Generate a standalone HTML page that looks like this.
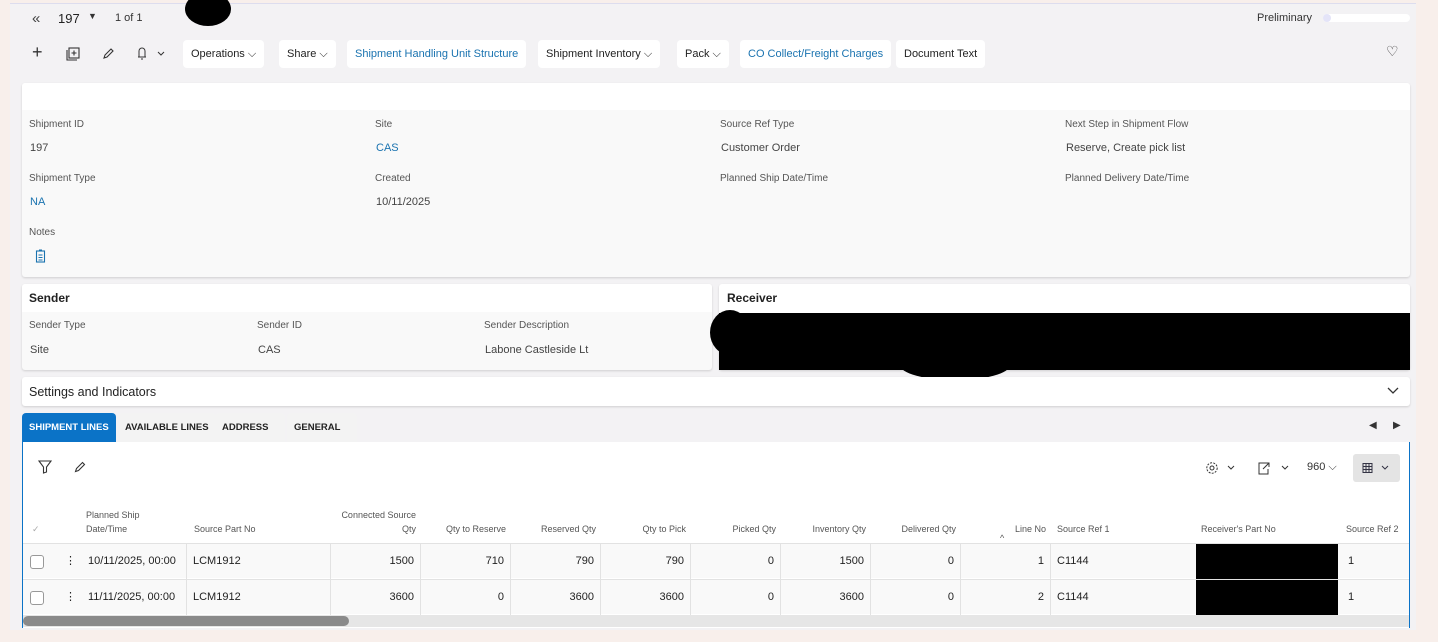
<!DOCTYPE html>
<html><head><meta charset="utf-8"><style>
*{box-sizing:border-box;margin:0;padding:0}
body{width:1438px;height:642px;background:#f8efeb;font-family:"Liberation Sans",sans-serif;font-size:11px;color:#333;position:relative;overflow:hidden}
.a{position:absolute}
#main{left:10px;top:3px;width:1406px;height:627px;background:#f3f2f4;border-top:1px solid #dde}
.btn{position:absolute;top:40px;height:28px;background:#fff;border-radius:4px;font-size:11px;line-height:28px;padding:0 8px;color:#222;white-space:nowrap}
.lbl{position:absolute;font-size:10px;color:#555}
.val{position:absolute;font-size:11px;color:#444}
.blue,.val.blue,.btn.blue{color:#1a73b0}
.card{position:absolute;background:#f9f9f9;border-radius:3px;box-shadow:0 1px 2px rgba(0,0,0,.15)}
.hdr{position:absolute;font-size:12px;font-weight:bold;color:#222}
.th{position:absolute;font-size:9px;color:#555;text-align:right;line-height:14px}
.row{position:absolute;left:23px;width:1386px;height:35px;background:#f9f9f9;border-top:1px solid #e2e2e2}
.c{position:absolute;top:0;height:35px;line-height:35px;font-size:11px;color:#222;border-right:1px solid #e2e2e2;padding:0 6px}
.r{text-align:right}
.tab{position:absolute;top:413px;height:29px;line-height:29px;font-size:9.5px;font-weight:bold;background:#f3f3f3;padding:0 7px;border-radius:4px 4px 0 0;color:#222}
</style></head><body>
<div id="main" class="a"></div>
<div class="a" style="left:32px;top:10px;font-size:15px;color:#444">«</div>
<div class="a" style="left:58px;top:11px;font-size:13px;color:#222">197</div>
<div class="a" style="left:88px;top:11px;font-size:9px">▼</div>
<div class="a" style="left:115px;top:12px;font-size:11px">1 of 1</div>
<div class="a" style="left:185px;top:-8px;width:46px;height:34px;border-radius:50%;background:#000"></div>
<div class="a" style="left:1257px;top:12px;font-size:11px">Preliminary</div>
<div class="a" style="left:1323px;top:14px;width:87px;height:8px;border-radius:4px;background:#fff"></div>
<div class="a" style="left:1323px;top:14px;width:8px;height:8px;border-radius:4px;background:#e4e4f8"></div>
<div class="a" style="left:32px;top:42px;font-size:18px;color:#333">+</div>
<svg class="a" style="left:66px;top:47px" width="14" height="14" viewBox="0 0 14 14" fill="none" stroke="#333" stroke-width="1.1"><rect x="3" y="1" width="10" height="10"/><path d="M1 3v10h10M8 3.5v5M5.5 6h5"/></svg>
<svg class="a" style="left:102px;top:47px" width="13" height="13" viewBox="0 0 13 13" fill="none" stroke="#333" stroke-width="1.1"><path d="M2 11l1-3 6-6 2 2-6 6z"/></svg>
<svg class="a" style="left:135px;top:46px" width="30" height="14" viewBox="0 0 30 14" fill="none" stroke="#333" stroke-width="1"><path d="M3 11h8M4 11V5a3 3 0 016 0v6M6 13h2M23 6l3 3 3-3"/></svg>
<div class="btn" style="left:183px">Operations ⌵</div>
<div class="btn" style="left:279px">Share ⌵</div>
<div class="btn blue" style="left:347px">Shipment Handling Unit Structure</div>
<div class="btn" style="left:538px">Shipment Inventory ⌵</div>
<div class="btn" style="left:677px">Pack ⌵</div>
<div class="btn blue" style="left:740px">CO Collect/Freight Charges</div>
<div class="btn" style="left:896px">Document Text</div>
<div class="a" style="left:1386px;top:43px;font-size:14px;color:#333">♡</div>

<div class="card" style="left:22px;top:83px;width:1388px;height:194px"></div>
<div class="a" style="left:22px;top:83px;width:1388px;height:27px;background:#fff;border-radius:3px 3px 0 0"></div>
<div class="lbl" style="left:29px;top:119px">Shipment ID</div><div class="val" style="left:30px;top:142px">197</div>
<div class="lbl" style="left:375px;top:119px">Site</div><div class="val blue" style="left:376px;top:142px">CAS</div>
<div class="lbl" style="left:720px;top:119px">Source Ref Type</div><div class="val" style="left:721px;top:142px">Customer Order</div>
<div class="lbl" style="left:1065px;top:119px">Next Step in Shipment Flow</div><div class="val" style="left:1066px;top:142px">Reserve, Create pick list</div>
<div class="lbl" style="left:29px;top:173px">Shipment Type</div><div class="val blue" style="left:30px;top:196px">NA</div>
<div class="lbl" style="left:375px;top:173px">Created</div><div class="val" style="left:376px;top:196px">10/11/2025</div>
<div class="lbl" style="left:720px;top:173px">Planned Ship Date/Time</div>
<div class="lbl" style="left:1065px;top:173px">Planned Delivery Date/Time</div>
<div class="lbl" style="left:29px;top:227px">Notes</div>
<svg class="a" style="left:35px;top:249px" width="11" height="14" viewBox="0 0 11 14" fill="none" stroke="#1a73b0" stroke-width="1.1"><rect x="1.5" y="2" width="8" height="11"/><path d="M4 1h3M3.5 6h4M3.5 8.5h4M3.5 11h4"/></svg>

<div class="card" style="left:22px;top:284px;width:690px;height:86px"></div>
<div class="a" style="left:22px;top:284px;width:690px;height:28px;background:#fff;border-radius:3px 3px 0 0"></div>
<div class="hdr" style="left:29px;top:291px">Sender</div>
<div class="lbl" style="left:29px;top:320px">Sender Type</div><div class="val" style="left:30px;top:344px">Site</div>
<div class="lbl" style="left:257px;top:320px">Sender ID</div><div class="val" style="left:258px;top:344px">CAS</div>
<div class="lbl" style="left:484px;top:320px">Sender Description</div><div class="val" style="left:485px;top:344px">Labone Castleside Lt</div>
<div class="card" style="left:719px;top:284px;width:691px;height:86px;background:#fff"></div>
<div class="hdr" style="left:727px;top:291px">Receiver</div>
<div class="a" style="left:719px;top:313px;width:691px;height:57px;background:#000"></div>
<div class="a" style="left:710px;top:310px;width:40px;height:45px;border-radius:50%;background:#000"></div>
<div class="a" style="left:900px;top:350px;width:110px;height:30px;border-radius:50%;background:#000"></div>

<div class="card" style="left:22px;top:377px;width:1388px;height:29px;background:#fff"></div>
<div class="hdr" style="left:29px;top:385px;font-weight:normal;font-size:12.5px">Settings and Indicators</div>
<svg class="a" style="left:1387px;top:386px" width="12" height="10" viewBox="0 0 12 10" fill="none" stroke="#333" stroke-width="1.3"><path d="M1 2l5 5 5-5"/></svg>

<div class="tab" style="left:22px;background:#0b73c7;color:#fff">SHIPMENT LINES</div>
<div class="tab" style="left:118px">AVAILABLE LINES</div>
<div class="tab" style="left:215px;width:70px">ADDRESS</div>
<div class="tab" style="left:287px;width:70px">GENERAL</div>
<div class="a" style="left:1369px;top:420px;font-size:10px">◀</div>
<div class="a" style="left:1393px;top:420px;font-size:10px">▶</div>

<div class="a" style="left:22px;top:442px;width:1388px;height:186px;background:#fff;border-left:1px solid #0b73c7;border-right:1px solid #0b73c7"></div>
<svg class="a" style="left:38px;top:460px" width="14" height="14" viewBox="0 0 14 14" fill="none" stroke="#333" stroke-width="1.1"><path d="M1 1h12L8.5 7v5L5.5 13V7z"/></svg>
<svg class="a" style="left:74px;top:461px" width="12" height="12" viewBox="0 0 12 12" fill="none" stroke="#333" stroke-width="1.1"><path d="M1.5 10.5l1-3 6-6 2 2-6 6z"/></svg>
<svg class="a" style="left:1205px;top:461px" width="32" height="14" viewBox="0 0 32 14" fill="none" stroke="#333" stroke-width="1"><circle cx="7" cy="7" r="2"/><circle cx="7" cy="7" r="5.2" stroke-dasharray="2 1.2"/><path d="M23 5l3 3 3-3"/></svg>
<svg class="a" style="left:1257px;top:461px" width="34" height="14" viewBox="0 0 34 14" fill="none" stroke="#333" stroke-width="1"><path d="M9 2H2v11h9V8M6 8l6-6M8 2h4v4M25 5l3 3 3-3"/></svg>
<div class="a" style="left:1307px;top:461px;font-size:11px">960 ⌵</div>
<div class="a" style="left:1353px;top:454px;width:47px;height:28px;background:#e4e4e4;border-radius:3px"></div>
<svg class="a" style="left:1362px;top:462px" width="30" height="12" viewBox="0 0 30 12" fill="none" stroke="#334" stroke-width="1"><rect x="1" y="1.5" width="9" height="9"/><path d="M1 4.5h9M1 7.5h9M4 1.5v9M7 1.5v9M20 4l3 3 3-3"/></svg>

<div class="th" style="left:32px;top:522px;text-align:left;color:#aaa">✓</div>
<div class="th" style="left:86px;top:508px;text-align:left">Planned Ship<br>Date/Time</div>
<div class="th" style="left:194px;top:522px;text-align:left">Source Part No</div>
<div class="th" style="left:320px;top:508px;width:96px">Connected Source<br>Qty</div>
<div class="th" style="left:420px;top:522px;width:86px">Qty to Reserve</div>
<div class="th" style="left:510px;top:522px;width:86px">Reserved Qty</div>
<div class="th" style="left:600px;top:522px;width:86px">Qty to Pick</div>
<div class="th" style="left:690px;top:522px;width:86px">Picked Qty</div>
<div class="th" style="left:780px;top:522px;width:86px">Inventory Qty</div>
<div class="th" style="left:870px;top:522px;width:86px">Delivered Qty</div>
<div class="th" style="left:960px;top:522px;width:86px">Line No</div>
<div class="th" style="left:1000px;top:531px;text-align:left">^</div>
<div class="th" style="left:1057px;top:522px;text-align:left">Source Ref 1</div>
<div class="th" style="left:1201px;top:522px;text-align:left">Receiver's Part No</div>
<div class="th" style="left:1346px;top:522px;text-align:left">Source Ref 2</div>

<div class="row" style="top:543px">
<div class="a" style="left:7px;top:11px;width:14px;height:14px;border:1px solid #999;border-radius:3px;background:#fff"></div>
<div class="c" style="left:36px;border:0">⋮</div>
<div class="c" style="left:59px;width:105px">10/11/2025, 00:00</div>
<div class="c" style="left:164px;width:144px">LCM1912</div>
<div class="c r" style="left:308px;width:90px">1500</div>
<div class="c r" style="left:398px;width:90px">710</div>
<div class="c r" style="left:488px;width:90px">790</div>
<div class="c r" style="left:578px;width:90px">790</div>
<div class="c r" style="left:668px;width:90px">0</div>
<div class="c r" style="left:758px;width:90px">1500</div>
<div class="c r" style="left:848px;width:90px">0</div>
<div class="c r" style="left:938px;width:90px">1</div>
<div class="c" style="left:1028px;width:140px;border:0">C1144</div>
<div class="a" style="left:1173px;top:0;width:142px;height:35px;background:#000"></div>
<div class="c" style="left:1319px;border:0">1</div>
</div>
<div class="row" style="top:579px">
<div class="a" style="left:7px;top:11px;width:14px;height:14px;border:1px solid #999;border-radius:3px;background:#fff"></div>
<div class="c" style="left:36px;border:0">⋮</div>
<div class="c" style="left:59px;width:105px">11/11/2025, 00:00</div>
<div class="c" style="left:164px;width:144px">LCM1912</div>
<div class="c r" style="left:308px;width:90px">3600</div>
<div class="c r" style="left:398px;width:90px">0</div>
<div class="c r" style="left:488px;width:90px">3600</div>
<div class="c r" style="left:578px;width:90px">3600</div>
<div class="c r" style="left:668px;width:90px">0</div>
<div class="c r" style="left:758px;width:90px">3600</div>
<div class="c r" style="left:848px;width:90px">0</div>
<div class="c r" style="left:938px;width:90px">2</div>
<div class="c" style="left:1028px;width:140px;border:0">C1144</div>
<div class="a" style="left:1173px;top:0;width:142px;height:35px;background:#000"></div>
<div class="c" style="left:1319px;border:0">1</div>
</div>
<div class="a" style="left:23px;top:615px;width:1386px;height:12px;background:#e6e6e6"></div>
<div class="a" style="left:23px;top:616px;width:326px;height:10px;background:#8a8a8a;border-radius:5px"></div>
</body></html>
